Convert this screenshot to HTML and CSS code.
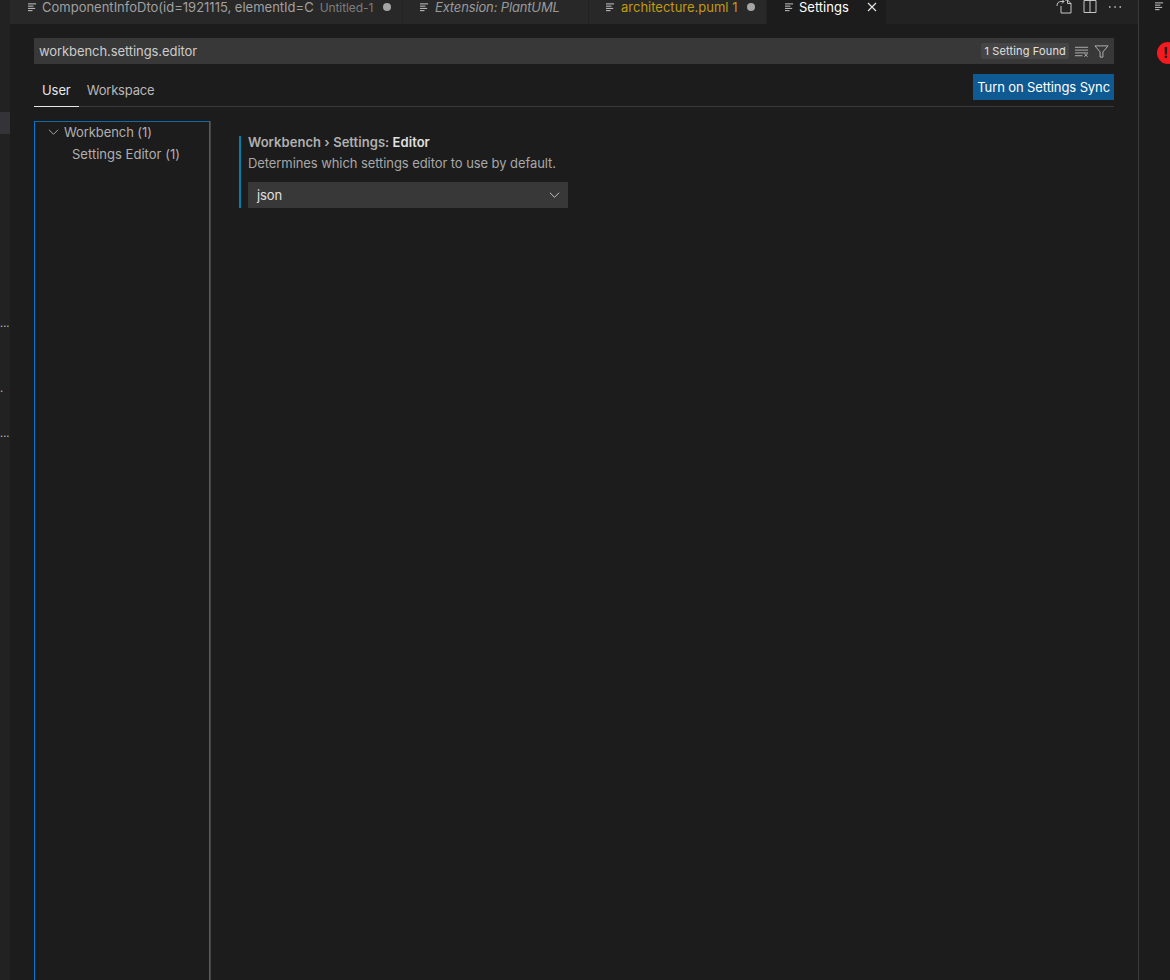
FILE: index.html
```html
<!DOCTYPE html>
<html lang="en">
<head>
    <meta charset="UTF-8">
    <title>Settings</title>
    <link rel="stylesheet" href="styles.css">
</head>
<body>
    <aside class="activity">
        <div class="activity-selected"></div>
        <div class="crumb crumb-a">...</div>
        <div class="crumb crumb-b">.</div>
        <div class="crumb crumb-c">...</div>
    </aside>

    <main class="editor">
        <div class="tabs">
            <div class="tab tab-first">
                <svg class="file-icon" viewBox="0 0 10 10"><path d="M0 1h9M0 3.500h6M0 6h8M0 8.500h5"/></svg>
                <span class="tab-name">ComponentInfoDto(id=1921115, elementId=C</span>
                <span class="tab-desc">Untitled-1</span>
                <span class="dirty"></span>
            </div>
            <div class="tab tab-ext">
                <svg class="file-icon" viewBox="0 0 10 10"><path d="M0 1h9M0 3.500h6M0 6h8M0 8.500h5"/></svg>
                <span class="tab-name italic">Extension: PlantUML</span>
            </div>
            <div class="tab tab-arch">
                <svg class="file-icon" viewBox="0 0 10 10"><path d="M0 1h9M0 3.500h6M0 6h8M0 8.500h5"/></svg>
                <span class="tab-name warn">architecture.puml 1</span>
                <span class="dirty"></span>
            </div>
            <div class="tab tab-active">
                <svg class="file-icon" viewBox="0 0 10 10"><path d="M0 1h9M0 3.500h6M0 6h8M0 8.500h5"/></svg>
                <span class="tab-name">Settings</span>
                <svg class="close-icon" viewBox="0 0 10 10"><path d="M1 1l8 8M9 1l-8 8"/></svg>
            </div>
            <div class="tab-actions">
                <svg class="action" viewBox="0 0 16 16"><path d="M5 7v7h10V4.500L11.500 1H9M11.500 1v3.500H15M1 7c0-3 1.500-4.500 4-4.500h3M6 .5l2 2-2 2"/></svg>
                <svg class="action" viewBox="0 0 16 16"><path d="M2 1.500h12v12H2zM8 1.500v12"/></svg>
                <svg class="action" viewBox="0 0 16 16"><path class="dots" d="M2 8h1.500M7.300 8h1.500M12.500 8H14"/></svg>
            </div>
        </div>

        <div class="settings">
            <div class="search">
                <span class="search-text">workbench.settings.editor</span>
                <span class="search-count">1 Setting Found</span>
                <svg class="search-icon" viewBox="0 0 16 16"><path d="M1 3.500h14M1 6.500h14M1 9.500h14M1 12.500h8M11 10.500l3.500 3M14.500 10.500l-3.500 3"/></svg>
                <svg class="search-icon" viewBox="0 0 16 16"><path d="M1 2h14L9.500 8.500V14h-3V8.500z"/></svg>
            </div>

            <div class="scopes">
                <div class="scope scope-on">User</div>
                <div class="scope scope-off">Workspace</div>
                <button class="sync">Turn on Settings Sync</button>
            </div>

            <div class="body">
                <nav class="toc">
                    <div class="toc-row toc-parent">
                        <svg class="chevron" viewBox="0 0 12 8"><path d="M1 1.500l5 5 5-5"/></svg>
                        <span>Workbench (1)</span>
                    </div>
                    <div class="toc-row toc-child">Settings Editor (1)</div>
                </nav>

                <section class="setting">
                    <div class="setting-title">Workbench › Settings: <strong>Editor</strong></div>
                    <div class="setting-desc">Determines which settings editor to use by default.</div>
                    <div class="select">
                        <span>json</span>
                        <svg class="chevron select-chevron" viewBox="0 0 12 8"><path d="M1 1.500l5 5 5-5"/></svg>
                    </div>
                </section>
            </div>
        </div>
    </main>

    <aside class="side">
        <svg class="file-icon side-icon" viewBox="0 0 10 10"><path d="M0 1h9M0 3.500h6M0 6h8M0 8.500h5"/></svg>
        <div class="error-badge">!</div>
    </aside>
</body>
</html>
```

FILE: styles.css
```css
:root {
    --bg: #1c1c1c;
    --bar: #222222;
    --tab: #282828;
    --text: #cccccc;
    --input: #383838;
    --blue: #0078d4;
}

* {
    box-sizing: border-box;
}

body {
    margin: 0;
    height: 980px;
    display: flex;
    overflow: hidden;
    background: var(--bg);
    color: var(--text);
    font-family: 'Inter', 'Liberation Sans', sans-serif;
    font-size: 13px;
    letter-spacing: -0.08px;
}

.activity {
    width: 10px;
    flex: none;
    background: var(--bar);
    position: relative;
    overflow: hidden;
}

.activity-selected {
    position: absolute;
    top: 112px;
    left: 0;
    right: 0;
    height: 22px;
    background: #333338;
}

.crumb {
    position: absolute;
    left: 0;
    color: #bbbbbb;
    font-size: 11px;
    line-height: 10px;
    letter-spacing: 0;
    white-space: nowrap;
}

.crumb-a { top: 318px; }
.crumb-b { top: 383px; }
.crumb-c { top: 428px; }

.editor {
    flex: 1;
    min-width: 0;
    display: flex;
    flex-direction: column;
}

.tabs {
    height: 24px;
    flex: none;
    display: flex;
    background: var(--bar);
}

.tab {
    display: flex;
    align-items: center;
    background: var(--tab);
    border-right: 1px solid var(--bar);
    color: #a0a0a0;
    white-space: nowrap;
    padding-bottom: 10px;
    height: 24px;
}

.tab-name {
    line-height: 14px;
    letter-spacing: 0;
}

.tab-first {
    width: 393px;
    padding-left: 18px;
}

.tab-first .file-icon {
    margin-right: 5px;
}

.tab-ext {
    width: 186px;
    padding-left: 17px;
}

.tab-arch {
    width: 178px;
    padding-left: 17px;
}

.tab-active {
    width: 119px;
    padding-left: 18px;
    background: var(--bg);
    color: #ffffff;
    border-right: none;
}

.tab-active .file-icon {
    margin-right: 5px;
}

.file-icon {
    width: 9px;
    height: 9px;
    flex: none;
    margin-right: 6px;
    fill: none;
    stroke: #c5c5c5;
    stroke-width: 1.1;
}

.tab-desc {
    margin-left: 6px;
    font-size: 12px;
    color: #7d7d7d;
}

.tab-name.italic {
    font-style: italic;
    color: #9a9a9a;
    letter-spacing: -0.15px;
}

.warn {
    color: #c09a12;
}

.dirty {
    width: 8px;
    height: 8px;
    border-radius: 50%;
    background: #a5a5a5;
    margin-left: 10px;
}

.close-icon {
    width: 10px;
    height: 10px;
    margin-left: 18px;
    fill: none;
    stroke: #e8e8e8;
    stroke-width: 1.1;
}

.tab-actions {
    flex: 1;
    display: flex;
    justify-content: flex-end;
    gap: 9.5px;
    padding: 0 15px 0 0;
}

.action {
    width: 16px;
    height: 16px;
    fill: none;
    stroke: #c5c5c5;
    stroke-width: 1;
    margin-top: -1px;
}

.action .dots {
    stroke-width: 1.500;
}

.settings {
    flex: 1;
    min-height: 0;
    display: flex;
    flex-direction: column;
    padding: 14px 24px 0 24px;
}

.search {
    height: 26px;
    flex: none;
    display: flex;
    align-items: center;
    background: var(--input);
    padding: 0 5px;
}

.search-text {
    flex: 1;
    color: #cccccc;
}

.search-count {
    font-size: 11px;
    letter-spacing: 0.15px;
    background: #454545;
    color: #e0e0e0;
    border-radius: 2px;
    padding: 0 3px;
    line-height: 16px;
}

.search-icon {
    width: 15px;
    height: 15px;
    margin-left: 5px;
    fill: none;
    stroke: #b4b4b4;
    stroke-width: 1;
}

.scopes {
    height: 43px;
    flex: none;
    display: flex;
    align-items: flex-start;
    border-bottom: 1px solid #3a3a3a;
}

.scope {
    height: 43px;
    padding: 19px 8px 0;
    line-height: 14px;
    color: #b8b8b8;
}

.scope-off {
    letter-spacing: -0.2px;
}

.scope-on {
    color: #e7e7e7;
    border-bottom: 1px solid #e7e7e7;
}

.sync {
    margin: 10px 0 0 auto;
    height: 26px;
    padding: 0 4px;
    border: none;
    background: #0f5a92;
    color: #ffffff;
    font: inherit;
    letter-spacing: -0.1px;
}

.body {
    flex: 1;
    min-height: 0;
    display: flex;
    padding-top: 14px;
}

.toc {
    width: 176px;
    flex: none;
    border: 1px solid var(--blue);
    border-top-color: #0f69ab;
    border-right-color: #1b6ba8;
    border-bottom: none;
    box-shadow: 1px 0 0 #444444;
    color: #b0b0b0;
}

.toc-row {
    height: 22px;
    display: flex;
    align-items: center;
    padding-left: 13px;
}

.toc-parent {
    margin-top: -1px;
}

.toc-child {
    padding-left: 37px;
    letter-spacing: 0.02px;
}

.chevron {
    width: 11px;
    height: 8px;
    fill: none;
    stroke: #b0b0b0;
    stroke-width: 1;
    margin-right: 5px;
}

.setting {
    width: 329px;
    height: 72px;
    margin: 15px 0 0 29px;
    padding-left: 7px;
    border-left: 2px solid #007fa8;
}

.setting-title {
    font-weight: 600;
    color: #b0b0b0;
    line-height: 16px;
    letter-spacing: 0.05px;
    margin-top: -2px;
    margin-bottom: 5px;
}

.setting-title strong {
    color: #e0e0e0;
    font-weight: 600;
}

.setting-desc {
    line-height: 16px;
    color: #a8a8a8;
}

.select {
    width: 320px;
    height: 26px;
    margin-top: 11px;
    display: flex;
    align-items: center;
    justify-content: space-between;
    background: var(--input);
    padding: 0 3px 0 9px;
    color: #e0e0e0;
}

.select-chevron {
    stroke: #d0d0d0;
}

.side {
    width: 32px;
    flex: none;
    background: var(--bg);
    border-left: 1px solid #3a3a3a;
    position: relative;
    overflow: hidden;
}

.side-icon {
    display: block;
    margin: 2px 0 0 16px;
}

.error-badge {
    position: absolute;
    top: 42px;
    left: 18px;
    width: 22px;
    height: 22px;
    border-radius: 50%;
    background: #f51a1f;
    color: #1c1c1c;
    font-weight: 700;
    font-size: 15px;
    line-height: 22px;
    padding-left: 6px;
}
```
